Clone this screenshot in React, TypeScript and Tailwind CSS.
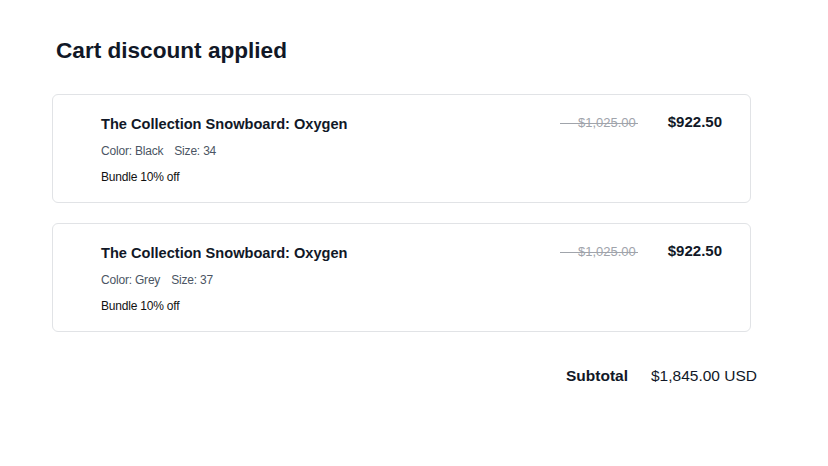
import React from 'react';

type Line = {
  title: string;
  color: string;
  size: string;
  original: string;
  price: string;
  discount: string;
};

const lines: Line[] = [
  { title: 'The Collection Snowboard: Oxygen', color: 'Black', size: '34', original: '$1,025.00', price: '$922.50', discount: 'Bundle 10% off' },
  { title: 'The Collection Snowboard: Oxygen', color: 'Grey', size: '37', original: '$1,025.00', price: '$922.50', discount: 'Bundle 10% off' },
];

const CartLine: React.FC<{ line: Line }> = ({ line }) => (
  <div className="flex justify-between rounded-md border border-[#e1e3e6] bg-white pl-12 pr-7 pt-[19px] pb-[15px]">
    <div>
      <div className="text-[14.6px] font-bold leading-5 text-[#111827]">{line.title}</div>
      <div className="mt-[7px] text-[12px] tracking-[-0.2px] leading-5 text-[#4b5563]">
        Color: {line.color}
        <span className="ml-[11px]">Size: {line.size}</span>
      </div>
      <div className="mt-[6px] text-[12px] tracking-[-0.2px] leading-5 text-[#111]">{line.discount}</div>
    </div>
    <div className="flex items-start gap-8">
      <span className="relative mt-[-1px] pl-[18px] text-[13px] leading-5 text-[#a0a4ab]">
        {line.original}
        {/* strike line runs past the left edge of the price */}
        <span className="absolute left-0 right-[-2px] top-[10px] h-px bg-[#a0a4ab]" />
      </span>
      <span className="mt-[-2px] text-[15px] font-bold leading-5 text-[#111827]">{line.price}</span>
    </div>
  </div>
);

const App: React.FC = () => {
  return (
    <div className="min-h-screen w-[828px] bg-white font-['Liberation_Sans',Arial,sans-serif]">
      <div className="pl-[52px] pr-[70px] pt-[37px]">
        <h1 className="pl-[4px] text-[22.6px] font-bold leading-7 text-[#111827]">Cart discount applied</h1>

        <div className="mt-[29px] flex flex-col gap-[20px] w-[699px]">
          {lines.map((line, i) => (
            <CartLine key={i} line={line} />
          ))}
        </div>

        <div className="mt-[32px] flex justify-end gap-[23px] text-[15.5px] leading-6 mr-[1px]">
          <span className="font-bold text-[#111827]">Subtotal</span>
          <span className="text-[#111827]">$1,845.00 USD</span>
        </div>
      </div>
    </div>
  );
};

export default App;
